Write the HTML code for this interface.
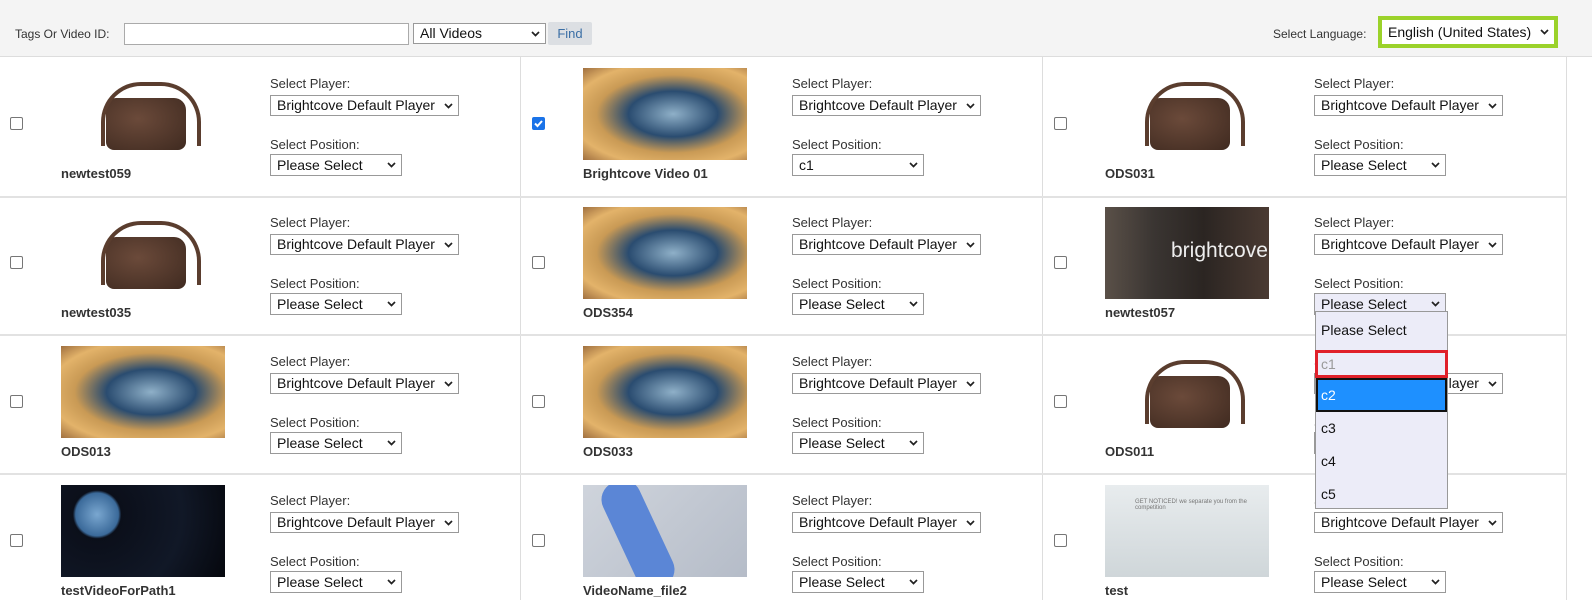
<!DOCTYPE html>
<html><head><meta charset="utf-8"><style>
*{box-sizing:border-box;margin:0;padding:0}
body{width:1592px;height:600px;overflow:hidden;background:#fff;font-family:"Liberation Sans",Arial,sans-serif;position:relative;color:#333}
.hdr{position:absolute;left:0;top:0;width:1592px;height:57px;background:#f4f4f4;border-bottom:1px solid #ddd}
.t{position:absolute;font-size:13px;color:#333;white-space:nowrap}
.sel{position:absolute;background:#fff;border:1px solid #999;font-size:14px;color:#111;padding:1px 0 0 6px;white-space:nowrap;line-height:17px;overflow:hidden}
.sel svg{position:absolute;right:5px;top:50%;margin-top:-3px}
.vl{position:absolute;top:57px;width:1px;height:543px;background:#ddd}
.hl{position:absolute;left:0;width:1566px;height:2px;background:#e2e2e2}
.c{position:absolute;width:520px;height:138px}
.cb{position:absolute;left:10px;top:60px;width:13px;height:13px;border:1px solid #767676;border-radius:2px;background:#fff}
.cb.on{background:#1a73e8;border-color:#1a73e8}
.img{position:absolute;left:61px;top:11px;width:164px;height:92px;overflow:hidden}
.nm{position:absolute;left:61px;top:109px;font-size:13px;font-weight:bold;color:#333}
.l1{position:absolute;left:270px;top:19px;font-size:13px;color:#333}
.l2{position:absolute;left:270px;top:80px;font-size:13px;color:#333}
.s1{left:270px;top:38px;width:189px;height:21px}
.s2{left:270px;top:97px;width:132px;height:22px;padding-top:2px}
.bag{background:#fff}
.bag::before{content:"";position:absolute;left:45px;top:30px;width:80px;height:52px;background:radial-gradient(ellipse at 40% 40%,#6b4a3a,#3f2a20);border-radius:10px 12px 8px 8px}
.bag::after{content:"";position:absolute;left:40px;top:14px;width:92px;height:60px;border:4px solid #5a3d2e;border-bottom:none;border-radius:40px 40px 0 0}
.quad{background:radial-gradient(ellipse at 55% 50%,#8fb0c8 0%,#2a4c70 35%,#c99a55 60%,#e3b36a 80%,#a07040 100%)}
.bc{background:linear-gradient(90deg,#5a5048 0%,#3a3532 30%,#2b2522 60%,#4a3a32 100%)}
.earth{background:radial-gradient(circle at 22% 32%,#7aa7d0 0,#3b6a9a 15%,#0b0f1a 17%,#111827 60%,#05070d 100%)}
.tie{background:linear-gradient(135deg,#cfd4dc,#b5bcc8)}
.test{background:linear-gradient(180deg,#e8ecee,#cfd6d9)}
</style></head><body>
<div class="hdr"></div>
<span class="t" style="left:15px;top:27px;font-size:12px">Tags Or Video ID:</span>
<div style="position:absolute;left:124px;top:23px;width:285px;height:22px;border:1px solid #aaa;background:#fff"></div>
<div class="sel" style="left:413px;top:23px;width:133px;height:21px">All Videos<svg width="9" height="6"><path d="M1 1l3.5 3.5L8 1" stroke="#222" stroke-width="1.7" fill="none"/></svg></div>
<div style="position:absolute;left:548px;top:22px;width:44px;height:23px;background:#dcdfe3;border-radius:2px;color:#3a6ea5;font-size:13px;text-align:center;line-height:23px">Find</div>
<span class="t" style="left:1273px;top:27px;font-size:12px">Select Language:</span>
<div style="position:absolute;left:1378px;top:16px;width:180px;height:32px;border:4px solid #9bd22a"></div>
<div class="sel" style="left:1382px;top:20px;width:172px;height:24px;border:none;padding-top:4px">English (United States)<svg width="9" height="6"><path d="M1 1l3.5 3.5L8 1" stroke="#222" stroke-width="1.7" fill="none"/></svg></div>

<div class="vl" style="left:520px"></div><div class="vl" style="left:1042px"></div><div class="vl" style="left:1566px"></div>
<div class="hl" style="top:196px"></div><div class="hl" style="top:334px"></div><div class="hl" style="top:473px"></div>

<div class="c" style="left:0;top:57px"><span class="cb"></span><div class="img bag"></div><b class="nm">newtest059</b><span class="l1">Select Player:</span><div class="sel s1">Brightcove Default Player<svg width="9" height="6"><path d="M1 1l3.5 3.5L8 1" stroke="#222" stroke-width="1.7" fill="none"/></svg></div><span class="l2">Select Position:</span><div class="sel s2">Please Select<svg width="9" height="6"><path d="M1 1l3.5 3.5L8 1" stroke="#222" stroke-width="1.7" fill="none"/></svg></div></div>
<div class="c" style="left:522px;top:57px"><span class="cb on"><svg width="11" height="11" style="position:absolute;left:0;top:0"><path d="M2 5.5l2.5 2.5L9 3" stroke="#fff" stroke-width="2" fill="none"/></svg></span><div class="img quad"></div><b class="nm">Brightcove Video 01</b><span class="l1">Select Player:</span><div class="sel s1">Brightcove Default Player<svg width="9" height="6"><path d="M1 1l3.5 3.5L8 1" stroke="#222" stroke-width="1.7" fill="none"/></svg></div><span class="l2">Select Position:</span><div class="sel s2">c1<svg width="9" height="6"><path d="M1 1l3.5 3.5L8 1" stroke="#222" stroke-width="1.7" fill="none"/></svg></div></div>
<div class="c" style="left:1044px;top:57px"><span class="cb"></span><div class="img bag"></div><b class="nm">ODS031</b><span class="l1">Select Player:</span><div class="sel s1">Brightcove Default Player<svg width="9" height="6"><path d="M1 1l3.5 3.5L8 1" stroke="#222" stroke-width="1.7" fill="none"/></svg></div><span class="l2">Select Position:</span><div class="sel s2">Please Select<svg width="9" height="6"><path d="M1 1l3.5 3.5L8 1" stroke="#222" stroke-width="1.7" fill="none"/></svg></div></div>

<div class="c" style="left:0;top:196px"><span class="cb"></span><div class="img bag"></div><b class="nm">newtest035</b><span class="l1">Select Player:</span><div class="sel s1">Brightcove Default Player<svg width="9" height="6"><path d="M1 1l3.5 3.5L8 1" stroke="#222" stroke-width="1.7" fill="none"/></svg></div><span class="l2">Select Position:</span><div class="sel s2">Please Select<svg width="9" height="6"><path d="M1 1l3.5 3.5L8 1" stroke="#222" stroke-width="1.7" fill="none"/></svg></div></div>
<div class="c" style="left:522px;top:196px"><span class="cb"></span><div class="img quad"></div><b class="nm">ODS354</b><span class="l1">Select Player:</span><div class="sel s1">Brightcove Default Player<svg width="9" height="6"><path d="M1 1l3.5 3.5L8 1" stroke="#222" stroke-width="1.7" fill="none"/></svg></div><span class="l2">Select Position:</span><div class="sel s2">Please Select<svg width="9" height="6"><path d="M1 1l3.5 3.5L8 1" stroke="#222" stroke-width="1.7" fill="none"/></svg></div></div>
<div class="c" style="left:1044px;top:196px"><span class="cb"></span><div class="img bc"><span style="position:absolute;left:66px;top:32px;color:#eee;font-size:21px">brightcove</span></div><b class="nm">newtest057</b><span class="l1">Select Player:</span><div class="sel s1">Brightcove Default Player<svg width="9" height="6"><path d="M1 1l3.5 3.5L8 1" stroke="#222" stroke-width="1.7" fill="none"/></svg></div><span class="l2">Select Position:</span><div class="sel s2" style="background:#ececf8">Please Select<svg width="9" height="6"><path d="M1 1l3.5 3.5L8 1" stroke="#222" stroke-width="1.7" fill="none"/></svg></div></div>

<div class="c" style="left:0;top:335px"><span class="cb"></span><div class="img quad"></div><b class="nm">ODS013</b><span class="l1">Select Player:</span><div class="sel s1">Brightcove Default Player<svg width="9" height="6"><path d="M1 1l3.5 3.5L8 1" stroke="#222" stroke-width="1.7" fill="none"/></svg></div><span class="l2">Select Position:</span><div class="sel s2">Please Select<svg width="9" height="6"><path d="M1 1l3.5 3.5L8 1" stroke="#222" stroke-width="1.7" fill="none"/></svg></div></div>
<div class="c" style="left:522px;top:335px"><span class="cb"></span><div class="img quad"></div><b class="nm">ODS033</b><span class="l1">Select Player:</span><div class="sel s1">Brightcove Default Player<svg width="9" height="6"><path d="M1 1l3.5 3.5L8 1" stroke="#222" stroke-width="1.7" fill="none"/></svg></div><span class="l2">Select Position:</span><div class="sel s2">Please Select<svg width="9" height="6"><path d="M1 1l3.5 3.5L8 1" stroke="#222" stroke-width="1.7" fill="none"/></svg></div></div>
<div class="c" style="left:1044px;top:335px"><span class="cb"></span><div class="img bag"></div><b class="nm">ODS011</b><span class="l1">Select Player:</span><div class="sel s1">Brightcove Default Player<svg width="9" height="6"><path d="M1 1l3.5 3.5L8 1" stroke="#222" stroke-width="1.7" fill="none"/></svg></div><span class="l2">Select Position:</span><div class="sel s2">Please Select<svg width="9" height="6"><path d="M1 1l3.5 3.5L8 1" stroke="#222" stroke-width="1.7" fill="none"/></svg></div></div>

<div class="c" style="left:0;top:474px"><span class="cb"></span><div class="img earth"></div><b class="nm">testVideoForPath1</b><span class="l1">Select Player:</span><div class="sel s1">Brightcove Default Player<svg width="9" height="6"><path d="M1 1l3.5 3.5L8 1" stroke="#222" stroke-width="1.7" fill="none"/></svg></div><span class="l2">Select Position:</span><div class="sel s2">Please Select<svg width="9" height="6"><path d="M1 1l3.5 3.5L8 1" stroke="#222" stroke-width="1.7" fill="none"/></svg></div></div>
<div class="c" style="left:522px;top:474px"><span class="cb"></span><div class="img tie"><div style="position:absolute;left:35px;top:-8px;width:40px;height:115px;background:#5b86d6;transform:rotate(-25deg);border-radius:18px"></div></div><b class="nm">VideoName_file2</b><span class="l1">Select Player:</span><div class="sel s1">Brightcove Default Player<svg width="9" height="6"><path d="M1 1l3.5 3.5L8 1" stroke="#222" stroke-width="1.7" fill="none"/></svg></div><span class="l2">Select Position:</span><div class="sel s2">Please Select<svg width="9" height="6"><path d="M1 1l3.5 3.5L8 1" stroke="#222" stroke-width="1.7" fill="none"/></svg></div></div>
<div class="c" style="left:1044px;top:474px"><span class="cb"></span><div class="img test"><span style="position:absolute;left:30px;top:14px;font-size:6px;color:#777">GET NOTICED! we separate you from the competition</span></div><b class="nm">test</b><span class="l1">Select Player:</span><div class="sel s1">Brightcove Default Player<svg width="9" height="6"><path d="M1 1l3.5 3.5L8 1" stroke="#222" stroke-width="1.7" fill="none"/></svg></div><span class="l2">Select Position:</span><div class="sel s2">Please Select<svg width="9" height="6"><path d="M1 1l3.5 3.5L8 1" stroke="#222" stroke-width="1.7" fill="none"/></svg></div></div>

<div style="position:absolute;left:1315px;top:311px;width:133px;height:198px;background:#ececf8;border:1px solid #999;font-size:14px;color:#111">
<div style="position:absolute;left:5px;top:10px">Please Select</div>
<div style="position:absolute;left:-1px;top:38px;width:133px;height:28px;border:3px solid #e0202a;color:#999;padding:3px 0 0 3px">c1</div>
<div style="position:absolute;left:0;top:66px;width:131px;height:34px;background:#1e90ff;border:2px solid #111;color:#fff;padding:7px 0 0 3px">c2</div>
<div style="position:absolute;left:5px;top:108px">c3</div>
<div style="position:absolute;left:5px;top:141px">c4</div>
<div style="position:absolute;left:5px;top:174px">c5</div>
</div>
</body></html>
